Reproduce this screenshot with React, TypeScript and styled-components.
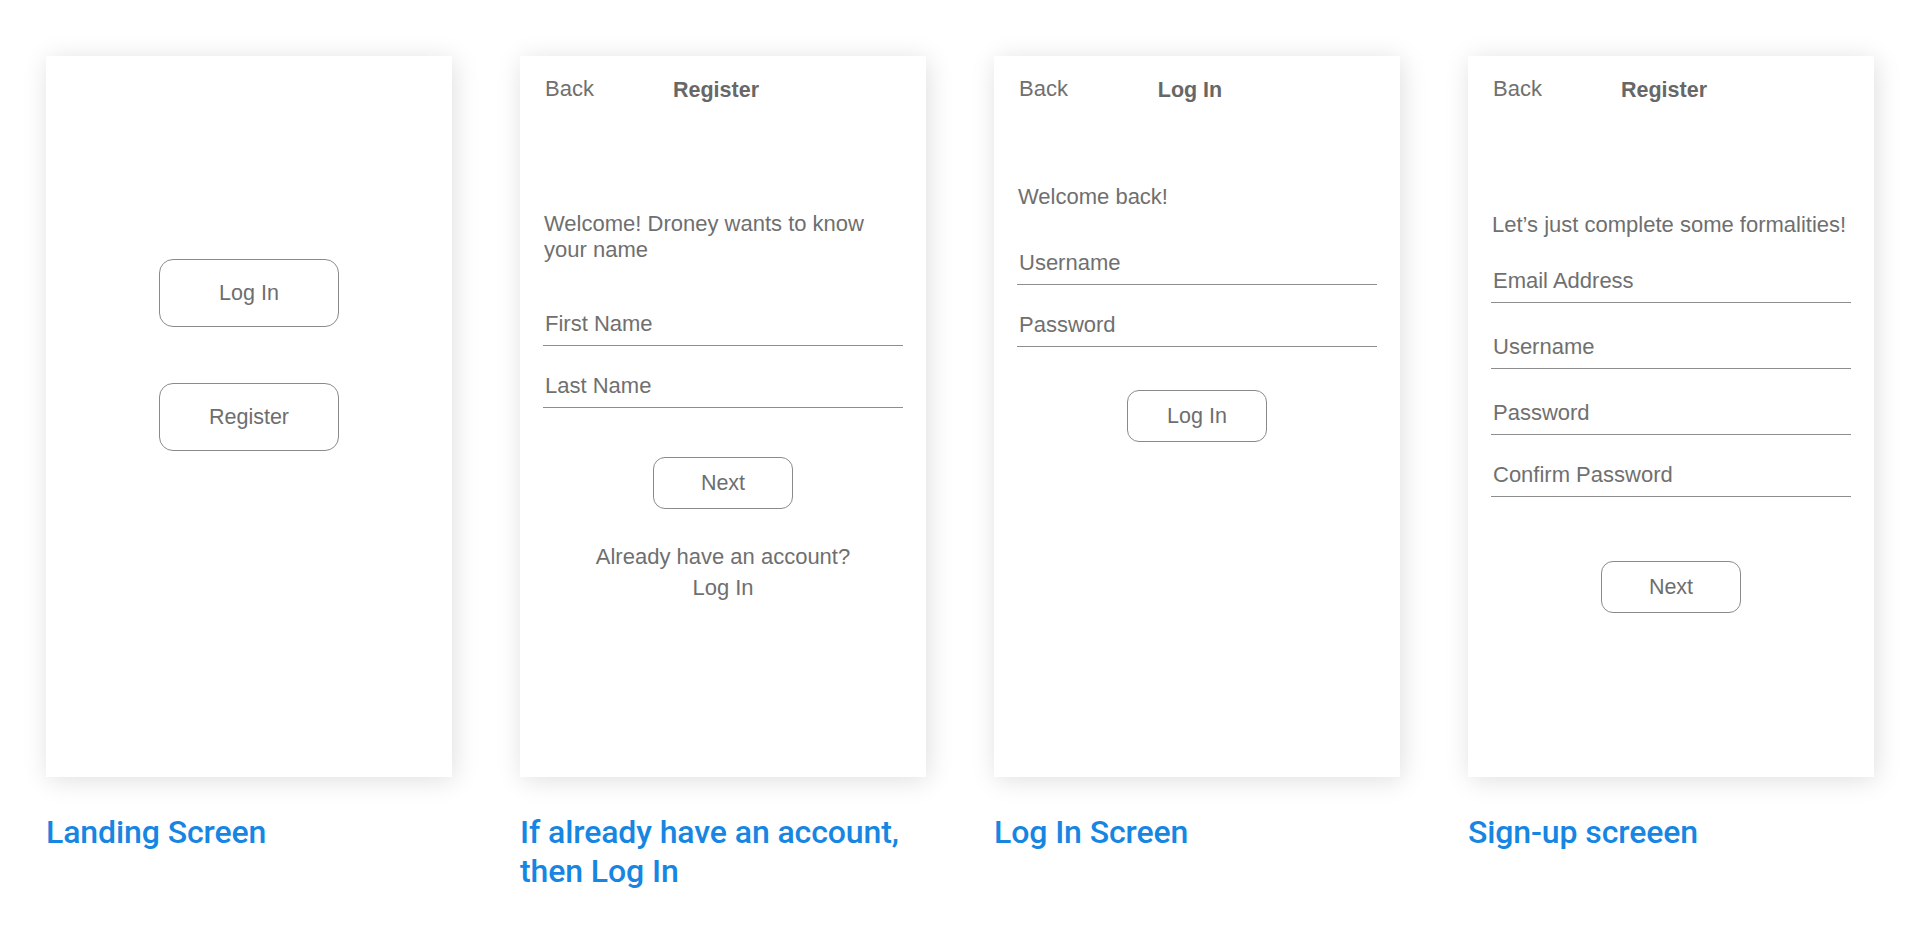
import React from "react";
import styled, { createGlobalStyle } from "styled-components";

const GlobalStyle = createGlobalStyle`
  html, body {
    margin: 0;
    padding: 0;
    background: #ffffff;
  }
  body {
    font-family: "Liberation Sans", Arial, sans-serif;
  }
`;

const Page = styled.div`
  display: flex;
  gap: 68px;
  padding: 56px 0 0 46px;
  width: 1920px;
  height: 932px;
  box-sizing: border-box;
  overflow: hidden;
`;

const Column = styled.section`
  display: flex;
  flex-direction: column;
  width: 406px;
`;

const Card = styled.div`
  display: flex;
  flex-direction: column;
  box-sizing: border-box;
  width: 406px;
  height: 721px;
  padding: 0 23px;
  background: #ffffff;
  box-shadow: 2px 3px 24px rgba(0, 0, 0, 0.13);
  color: #6f6f6f;
  font-size: 22px;
`;

const Header = styled.div`
  display: grid;
  grid-template-columns: 1fr auto 1fr;
  align-items: start;
  padding: 20px 16px 0 2px;
  line-height: 26px;
`;

const Back = styled.span`
  color: #707070;
`;

const Title = styled.span`
  padding-top: 1px;
  font-weight: 700;
  font-size: 21.5px;
  color: #676767;
`;

const Text = styled.p<{ $top: number; $center?: boolean; $lh?: number }>`
  margin: ${(p) => p.$top}px 0 0;
  padding: 0 1px;
  line-height: ${(p) => p.$lh ?? 26}px;
  text-align: ${(p) => (p.$center ? "center" : "left")};
  color: #6f6f6f;
`;

const Field = styled.div<{ $top: number }>`
  margin-top: ${(p) => p.$top}px;
  padding: 0 2px 8px;
  line-height: 26px;
  color: #707070;
  border-bottom: 1px solid #8e8e8e;
`;

const Button = styled.div<{ $top: number; $w: number; $h: number; $r: number }>`
  display: flex;
  align-items: center;
  justify-content: center;
  align-self: center;
  box-sizing: border-box;
  margin-top: ${(p) => p.$top}px;
  width: ${(p) => p.$w}px;
  height: ${(p) => p.$h}px;
  border: 1px solid #8a8a8a;
  border-radius: ${(p) => p.$r}px;
  font-size: 21.5px;
  color: #6e6e6e;
`;

const Label = styled.h2`
  margin: 36px 0 0;
  font-family: Roboto, "Noto Sans", sans-serif;
  font-weight: 500;
  font-size: 32px;
  line-height: 39.4px;
  color: #1686e2;
  letter-spacing: -0.1px;
`;

const NavHeader = ({ title }: { title: string }) => (
  <Header>
    <Back>Back</Back>
    <Title>{title}</Title>
    <span />
  </Header>
);

export default function App() {
  return (
    <>
      <GlobalStyle />
      <Page>
        <Column>
          <Card>
            <Button $top={203} $w={180} $h={68} $r={14}>
              Log In
            </Button>
            <Button $top={56} $w={180} $h={68} $r={14}>
              Register
            </Button>
          </Card>
          <Label>Landing Screen</Label>
        </Column>

        <Column>
          <Card>
            <NavHeader title="Register" />
            <Text $top={108}>Welcome! Droney wants to know your name</Text>
            <Field $top={48}>First Name</Field>
            <Field $top={27}>Last Name</Field>
            <Button $top={49} $w={140} $h={52} $r={12}>
              Next
            </Button>
            <Text $top={32} $center $lh={31}>
              Already have an account?
              <br />
              Log In
            </Text>
          </Card>
          <Label>If already have an account, then Log In</Label>
        </Column>

        <Column>
          <Card>
            <NavHeader title="Log In" />
            <Text $top={81}>Welcome back!</Text>
            <Field $top={40}>Username</Field>
            <Field $top={27}>Password</Field>
            <Button $top={43} $w={140} $h={52} $r={12}>
              Log In
            </Button>
          </Card>
          <Label>Log In Screen</Label>
        </Column>

        <Column>
          <Card>
            <NavHeader title="Register" />
            <Text $top={109}>Let’s just complete some formalities!</Text>
            <Field $top={30}>Email Address</Field>
            <Field $top={31}>Username</Field>
            <Field $top={31}>Password</Field>
            <Field $top={27}>Confirm Password</Field>
            <Button $top={64} $w={140} $h={52} $r={12}>
              Next
            </Button>
          </Card>
          <Label>Sign-up screeen</Label>
        </Column>
      </Page>
    </>
  );
}
